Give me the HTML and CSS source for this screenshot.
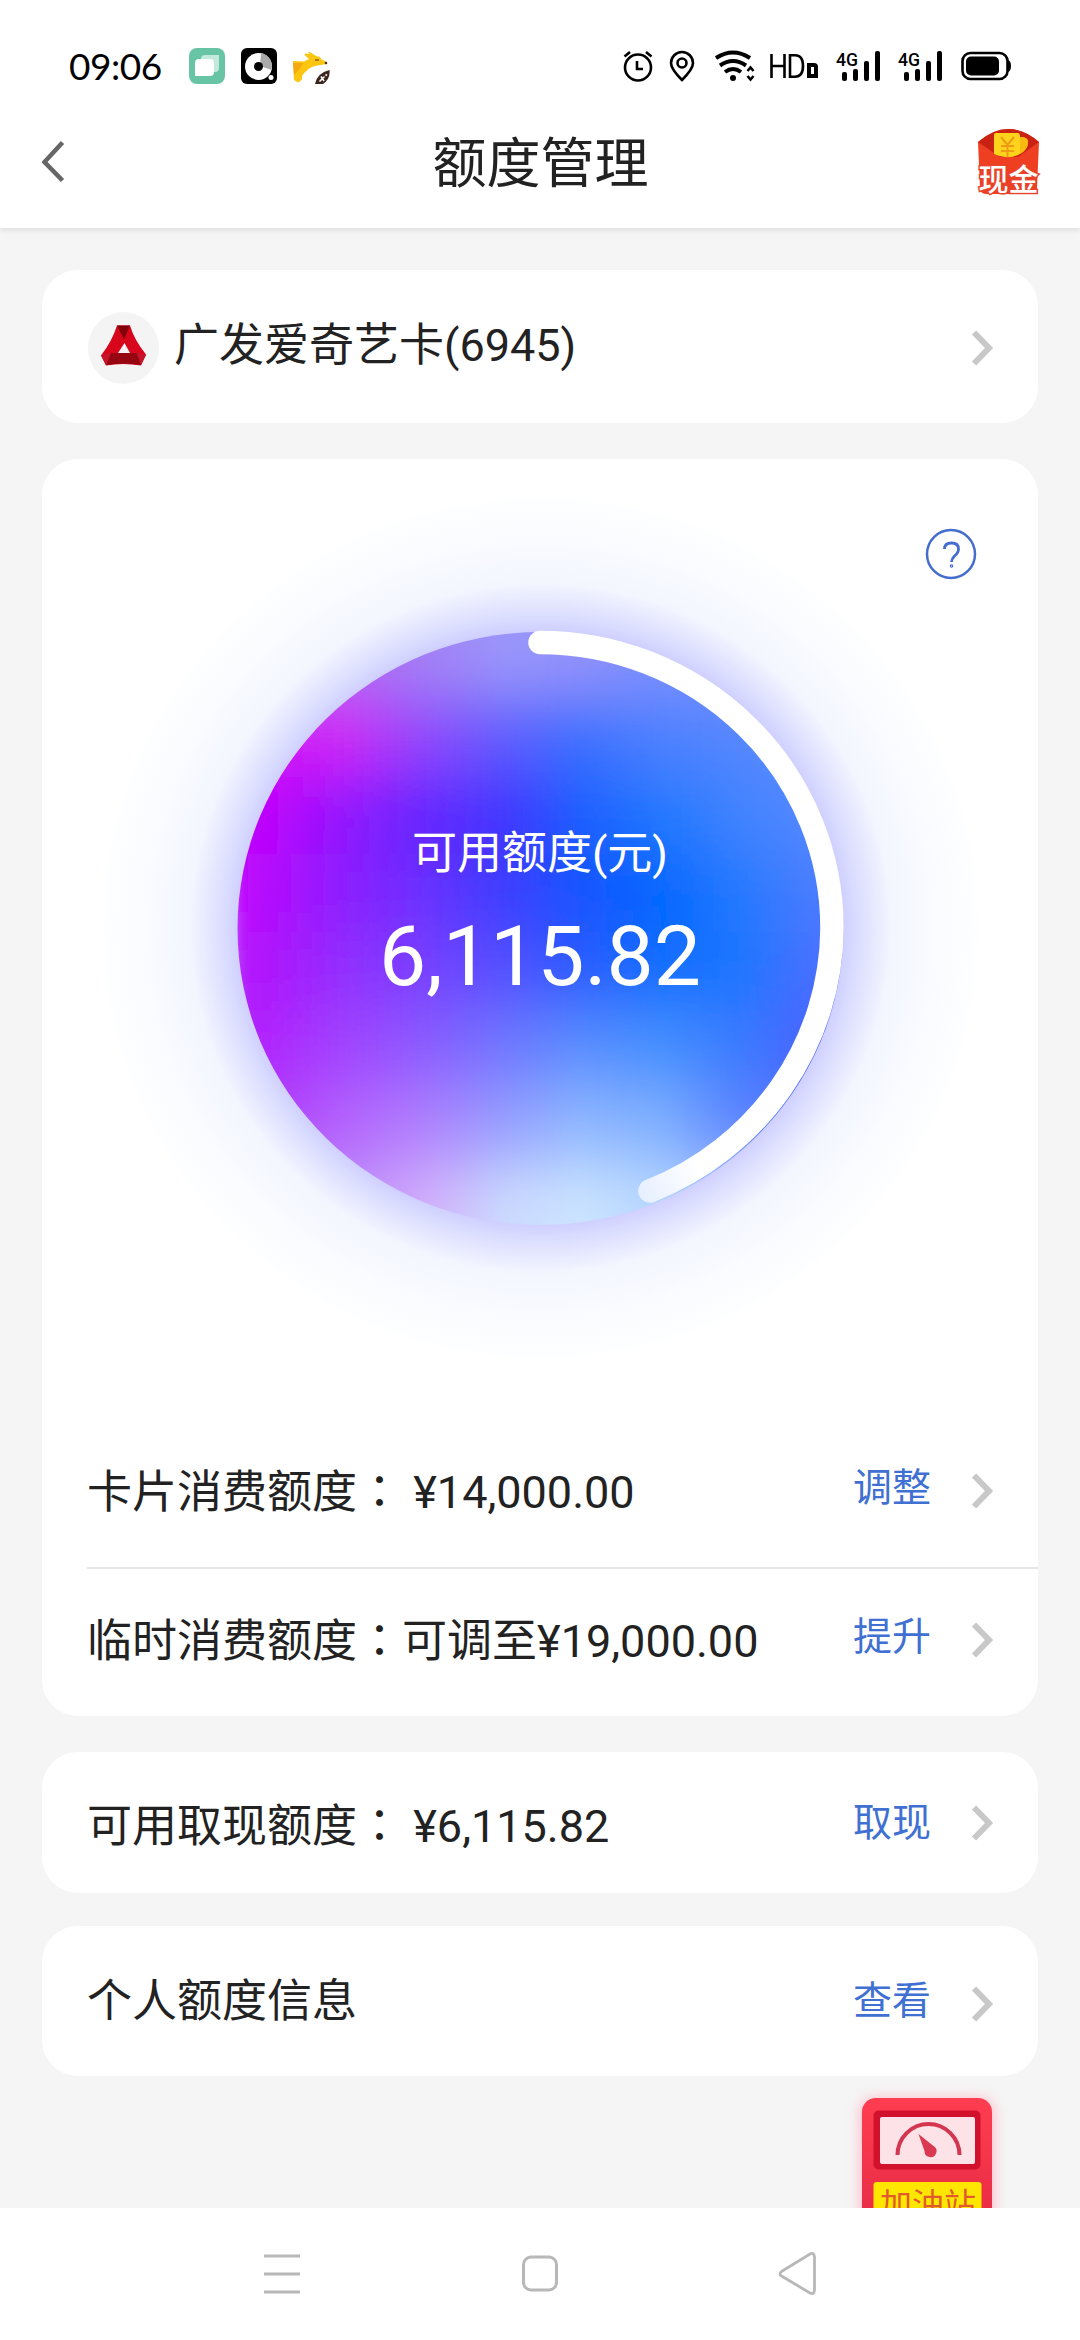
FILE: index.html
```html
<!DOCTYPE html>
<html lang="zh-CN">
<head>
<meta charset="utf-8">
<title>额度管理</title>
<link rel="stylesheet" href="styles.css">
</head>
<body>
<header class="top">
  <div class="status">
    <span class="time">09:06</span>
    <div class="apps">
      <svg width="36" height="36" viewBox="0 0 36 36"><rect width="36" height="36" rx="8" fill="#67c5a6"/><path d="M12 11q0-4 4-4h14v13q0 4-4 4H12z" fill="#c3e8dc"/><path d="M6 28V15q0-4 4-4h11q4 0 4 4v9q0 4-4 4z" fill="#fff"/></svg>
      <svg width="36" height="36" viewBox="0 0 36 36"><rect width="36" height="36" rx="6" fill="#000"/><circle cx="17.500" cy="18.500" r="13.500" fill="#fff"/><path d="M20 5A13.500 13.500 0 0 1 30.500 22L19 18z" fill="#aaa"/><circle cx="17.500" cy="18.500" r="4.500" fill="#000"/><circle cx="30" cy="29.500" r="2.500" fill="#fff"/></svg>
      <svg width="37" height="36" viewBox="0 0 37 36"><path d="M0 13l11 .5 5-2.500-4.500-4 .5-1.500 5 .5-2-1.500 2-.5 6 4 4 1 1.500 2.500L34 14l-.5 2-9 1.500q-6 .5-10 4.500-4 3-5.500 6 1 4-4 6.500L1 32z" fill="#fcc50f"/><path d="M0 15h10l-4 7-5 5z" fill="#f5a911"/><circle cx="33" cy="15" r="1.300" fill="#513126"/><path d="M22 12h4" stroke="#513126"/><path d="M22 36Q24 25 36.500 22 37.500 31 30 36z" fill="#3d241c"/><path d="M26.500 33.500l5-5M28 28.500l3 4.500M32.500 26.500l1.500 1" stroke="#fff" stroke-width="1.600"/></svg>
    </div>
    <svg class="sys" width="400" height="40" viewBox="620 46 400 40">
      <g fill="none" stroke="#000" stroke-width="2.600">
        <circle cx="638" cy="67.500" r="13"/><path d="M637 61v8h6M624.500 56.500l5.500-4.500M651.500 56.500L646 52"/>
        <path d="M682 80q-11-11-11-17a11 11 0 0 1 22 0q0 6-11 17z"/><circle cx="682" cy="63" r="4.500"/>
        <path d="M716 58q17-11 34 0M720 65.500q13-9 26 0M725 72q8-6 16 0" stroke-width="4"/>
        <path d="M747.500 71l3-3.500 3 3.500M747.500 76l3 3.500 3-3.500"/>
        <path d="M771.500 54v24M784.500 54v24M771.500 66h13M790 55.300h5q8 0 8 10.700t-8 10.700h-5z"/>
        <path d="M809 65h5q2 0 2 2v9h-7z" stroke-width="4"/>
        <rect x="962.500" y="53" width="45" height="26" rx="8"/>
      </g>
      <g fill="#000"><circle cx="733" cy="78" r="3"/>
        <rect x="842" y="72" width="5" height="9" rx="2"/><rect x="853" y="69" width="5" height="12" rx="2"/><rect x="864" y="61" width="5" height="20" rx="2"/><rect x="875" y="51" width="5" height="30" rx="2"/>
        <rect x="904" y="72" width="5" height="9" rx="2"/><rect x="915" y="69" width="5" height="12" rx="2"/><rect x="926" y="61" width="5" height="20" rx="2"/><rect x="937" y="51" width="5" height="30" rx="2"/>
        <rect x="966" y="56.500" width="33" height="19" rx="5"/><path d="M1008 60q3 1 3 6t-3 6z"/>
        <text class="net" x="836" y="65.500" textLength="22" lengthAdjust="spacingAndGlyphs">4G</text><text class="net" x="898" y="65.500" textLength="22" lengthAdjust="spacingAndGlyphs">4G</text></g>
    </svg>
  </div>
  <div class="titlebar">
    <svg width="64" height="68" viewBox="0 0 64 68"><path d="M20.500 14.500L2.500 34 20.500 52.500" fill="none" stroke="#666" stroke-width="4.500"/></svg>
    <h1>额度管理</h1>
    <svg width="68" height="68" viewBox="975 128 68 68">
      <path d="M978 142Q1008 116 1039 142L1037 188Q1037 194 1031 194H987Q980 194 980 188z" fill="#ef3f22"/>
      <path d="M978 142Q1008 116 1039 142L1018 157H1000z" fill="#c92213"/>
      <path d="M994 135q0-2 2-2h22q2 0 2 4 8 0 8 5 0 8-10 13-12 5-24-1z" fill="#ffd21b"/>
      <path d="M1020 137q8 0 8 5 0 8-8 12z" fill="#f8b911"/>
      <path d="M1001 137l6.500 8 6.500-8M1007.500 145v12M1001 146h13M1001 151h13" fill="none" stroke="#ef9b16" stroke-width="2"/>
      <text class="cash" x="1008.500" y="189.500" text-anchor="middle">现金</text>
    </svg>
  </div>
</header>

<main class="screen">
  <section class="card pick">
    <svg width="71" height="72" viewBox="88 312 71 72"><ellipse cx="123.500" cy="348" rx="35.500" ry="36" fill="#f4f4f4"/>
      <path d="M117 325.500h13q4 14 16 29l-5 11q-18-3-35 0l-5-10q11-14 16-30z" fill="#d8061d"/><path d="M117 325.500h13l-6 14z" fill="#81000a"/><path d="M111 353h26l4 12q-18-3-35 0z" fill="#960611"/><path d="M101 355.500l10-2.500-5 12zM146 355l-9-2 4 12z" fill="#c4152b"/><path d="M124.500 343l5.500 10h-12z" fill="#f4f4f4"/></svg>
    <span class="label">广发爱奇艺卡(6945)</span>
    <svg class="arrow" width="24" height="36" viewBox="0 0 24 36"><path d="M3 2.500L18 18 3 33.500" fill="none" stroke="#c8c8c8" stroke-width="6"/></svg>
  </section>

  <section class="card quota">
    <div class="gauge">
      <svg class="dial" width="996" height="961" viewBox="42 459 996 961">
        <defs>
          <clipPath id="disc"><ellipse cx="540.500" cy="928.500" rx="303" ry="296.500"/></clipPath>
          <radialGradient id="halo"><stop offset=".67" stop-color="#c8c8ff"/><stop offset=".72" stop-color="#dadcff"/><stop offset=".79" stop-color="#f0f2ff"/><stop offset=".8" stop-color="#f4f6ff"/><stop offset=".885" stop-color="#f8faff"/><stop offset=".89" stop-color="#fafbff"/><stop offset=".99" stop-color="#fdfeff"/><stop offset="1" stop-color="#fff"/></radialGradient>
          <linearGradient id="trail" gradientUnits="userSpaceOnUse" x1="700" y1="1170" x2="645" y2="1195"><stop offset="0" stop-color="#fff"/><stop offset="1" stop-color="#e8f0ff"/></linearGradient>
          <filter id="soft" filterUnits="userSpaceOnUse" x="0" y="420" width="1080" height="1040"><feGaussianBlur stdDeviation="10 30"/></filter>
          <linearGradient id="b1"><stop offset=".06" stop-color="#b070f8"/><stop offset=".19" stop-color="#b068f5"/><stop offset=".31" stop-color="#a480f6"/><stop offset=".44" stop-color="#9a96fa"/><stop offset=".56" stop-color="#9292fb"/><stop offset=".69" stop-color="#7a90fe"/><stop offset="1" stop-color="#6f8fff"/></linearGradient>
          <linearGradient id="b2"><stop offset=".06" stop-color="#d80cf8"/><stop offset=".19" stop-color="#cc2af5"/><stop offset=".31" stop-color="#9345fb"/><stop offset=".44" stop-color="#5f5cfe"/><stop offset=".56" stop-color="#3a70ff"/><stop offset=".69" stop-color="#4c80ff"/><stop offset="1" stop-color="#6090ff"/></linearGradient>
          <linearGradient id="b3"><stop offset=".06" stop-color="#bc04fc"/><stop offset=".19" stop-color="#8d17fe"/><stop offset=".31" stop-color="#6424ff"/><stop offset=".44" stop-color="#4034ff"/><stop offset=".56" stop-color="#1c5eff"/><stop offset=".69" stop-color="#2078ff"/><stop offset=".81" stop-color="#3f82ff"/><stop offset=".94" stop-color="#5588ff"/></linearGradient>
          <linearGradient id="b4"><stop offset=".02" stop-color="#c005fd"/><stop offset=".19" stop-color="#8a20fe"/><stop offset=".31" stop-color="#6a30ff"/><stop offset=".44" stop-color="#3c3eff"/><stop offset=".56" stop-color="#1854ff"/><stop offset=".69" stop-color="#0466ff"/><stop offset=".81" stop-color="#2278ff"/><stop offset=".94" stop-color="#4a7cff"/></linearGradient>
          <linearGradient id="b5"><stop offset=".04" stop-color="#b212fc"/><stop offset=".19" stop-color="#9030fe"/><stop offset=".31" stop-color="#7840ff"/><stop offset=".44" stop-color="#5450ff"/><stop offset=".56" stop-color="#2b5cff"/><stop offset=".69" stop-color="#106eff"/><stop offset=".81" stop-color="#1c74ff"/><stop offset=".94" stop-color="#4870ff"/></linearGradient>
          <linearGradient id="b6"><stop offset=".06" stop-color="#b026fd"/><stop offset=".19" stop-color="#a045fe"/><stop offset=".31" stop-color="#8c5cff"/><stop offset=".44" stop-color="#7078ff"/><stop offset=".56" stop-color="#5a8eff"/><stop offset=".69" stop-color="#4490ff"/><stop offset=".81" stop-color="#3a7cff"/><stop offset=".94" stop-color="#4a60ff"/></linearGradient>
          <linearGradient id="b7"><stop offset=".06" stop-color="#b040fb"/><stop offset=".19" stop-color="#b565fd"/><stop offset=".31" stop-color="#b080fd"/><stop offset=".44" stop-color="#98a0fe"/><stop offset=".56" stop-color="#90b8ff"/><stop offset=".69" stop-color="#80b0ff"/><stop offset=".81" stop-color="#6088ff"/><stop offset=".94" stop-color="#5070ff"/></linearGradient>
          <linearGradient id="b8"><stop offset=".06" stop-color="#c080fb"/><stop offset=".19" stop-color="#c090fb"/><stop offset=".31" stop-color="#d2b0fb"/><stop offset=".44" stop-color="#ccdafe"/><stop offset=".56" stop-color="#cce4ff"/><stop offset=".69" stop-color="#b8d8ff"/><stop offset=".81" stop-color="#a0c0ff"/><stop offset=".94" stop-color="#90b0ff"/></linearGradient>
        </defs>
        <ellipse cx="540.500" cy="928" rx="439" ry="431" fill="url(#halo)"/>
        <g clip-path="url(#disc)">
          <g filter="url(#soft)">
            <rect x="230" y="500" width="624" height="198" fill="url(#b1)"/>
            <rect x="230" y="698" width="624" height="78" fill="url(#b2)"/>
            <rect x="230" y="776" width="624" height="78" fill="url(#b3)"/>
            <rect x="230" y="854" width="624" height="78" fill="url(#b4)"/>
            <rect x="230" y="932" width="624" height="78" fill="url(#b5)"/>
            <rect x="230" y="1010" width="624" height="78" fill="url(#b6)"/>
            <rect x="230" y="1088" width="624" height="78" fill="url(#b7)"/>
            <rect x="230" y="1166" width="624" height="198" fill="url(#b8)"/>
          </g>
        </g>
        <path d="M540 642.500A292 285.500 0 0 1 832 928A292 285.500 0 0 1 650 1191" fill="none" stroke="url(#trail)" stroke-width="23.500" stroke-linecap="round"/>
        <g fill="none" stroke="#456dcd"><circle cx="951" cy="554" r="24" stroke-width="2.500"/><path d="M944.500 549q0-6 7-6t7 6q0 4-4 7-3 3-3 6" stroke-width="2.800"/><circle cx="951.500" cy="566" r=".6" stroke-width="2.400"/></g>
      </svg>
      <div class="figure"><span class="caption">可用额度(元)</span><strong>6,115.82</strong></div>
    </div>
    <div class="row first">
      <span class="label">卡片消费额度<span class="colon" lang="zh-TW">：</span> ¥14,000.00</span><a class="act">调整</a>
      <svg class="arrow" width="24" height="36" viewBox="0 0 24 36"><path d="M3 2.500L18 18 3 33.500" fill="none" stroke="#c8c8c8" stroke-width="6"/></svg>
    </div>
    <div class="row second">
      <span class="label">临时消费额度<span class="colon" lang="zh-TW">：</span>可调至¥19,000.00</span><a class="act">提升</a>
      <svg class="arrow" width="24" height="36" viewBox="0 0 24 36"><path d="M3 2.500L18 18 3 33.500" fill="none" stroke="#c8c8c8" stroke-width="6"/></svg>
    </div>
  </section>

  <section class="card row cashout">
    <span class="label">可用取现额度<span class="colon" lang="zh-TW">：</span> ¥6,115.82</span><a class="act">取现</a>
    <svg class="arrow" width="24" height="36" viewBox="0 0 24 36"><path d="M3 2.500L18 18 3 33.500" fill="none" stroke="#c8c8c8" stroke-width="6"/></svg>
  </section>
  <section class="card row info">
    <span class="label">个人额度信息</span><a class="act">查看</a>
    <svg class="arrow" width="24" height="36" viewBox="0 0 24 36"><path d="M3 2.500L18 18 3 33.500" fill="none" stroke="#c8c8c8" stroke-width="6"/></svg>
  </section>

  <div class="station">
    <svg width="170" height="132" viewBox="842 2076 170 132">
      <defs><linearGradient id="pump" x1="0" y1="0" x2="0" y2="1"><stop offset="0" stop-color="#ff3d51"/><stop offset="1" stop-color="#e42a43"/></linearGradient><filter id="glow" x="-20%" y="-20%" width="140%" height="140%"><feGaussianBlur stdDeviation="7"/></filter></defs>
      <rect x="860" y="2098" width="134" height="150" rx="14" fill="#ffbcc8" filter="url(#glow)"/>
      <rect x="862" y="2098" width="130" height="140" rx="14" fill="url(#pump)"/>
      <rect x="873.500" y="2110.500" width="107" height="59" rx="5" fill="#d2122c"/>
      <rect x="880" y="2117" width="95" height="47" rx="2" fill="#fde2e7"/>
      <path d="M897.500 2155a31 31 0 0 1 62 0" fill="none" stroke="#d43650" stroke-width="4"/>
      <path d="M918.500 2134l15 12a6 6 0 1 1-9 5z" fill="#d93951"/>
      <rect x="873.500" y="2182" width="108" height="40" rx="3" fill="#ffe600"/>
      <text class="fuel" x="928" y="2216" text-anchor="middle">加油站</text>
    </svg>
  </div>
</main>

<nav class="keys">
  <svg width="40" height="44" viewBox="0 0 40 44"><path d="M2 4h36M2 22h36M2 40h36" stroke="#b8b8b8" stroke-width="3"/></svg>
  <svg width="40" height="44" viewBox="0 0 40 44"><rect x="3.500" y="5" width="33" height="33" rx="7.500" fill="none" stroke="#b8b8b8" stroke-width="3"/></svg>
  <svg width="40" height="50" viewBox="0 0 40 50"><path d="M3.500 22.500L32 5q4-2 4.500 3v33q-.5 5-4.500 3L3.500 27q-3-2 0-4.500z" fill="none" stroke="#b8b8b8" stroke-width="2.800"/></svg>
</nav>
</body>
</html>
```
FILE: styles.css
```css
* { box-sizing: border-box; }
body {
  margin: 0;
  width: 1080px;
  height: 2340px;
  display: flex;
  flex-direction: column;
  overflow: hidden;
  background: #f5f5f5;
  color: #222;
  font-family: Roboto, "Noto Sans CJK SC", sans-serif;
}
svg { display: block; flex: none; }
.top { height: 228px; background: #fff; box-shadow: 0 2px 6px rgba(0, 0, 0, .1); z-index: 1; }
.status { height: 132px; padding: 0 60px 0 69px; display: flex; align-items: center; }
.time { width: 120px; font: 37px/40px Lato, sans-serif; letter-spacing: -.5px; color: #000; }
.apps { display: flex; gap: 16px; }
.sys { margin-left: auto; }
.net { font: 500 19px Roboto, sans-serif; }
.titlebar { height: 68px; margin-top: -4px; padding: 0 37px 0 42px; display: flex; align-items: center; justify-content: space-between; }
h1 { margin: 6px 0 0; font-size: 54px; font-weight: 400; line-height: 64px; }
.cash { font: 500 30px "Noto Sans CJK SC", sans-serif; fill: #fff; stroke: #e8442c; stroke-width: 3px; paint-order: stroke; }
.screen { position: relative; height: 1980px; padding: 42px 42px 0; overflow: hidden; }
.card { background: #fff; border-radius: 36px; }
.label { font-size: 45px; line-height: 60px; white-space: pre; }
.colon { font-family: "Noto Sans CJK TC", sans-serif; }
.arrow { margin-left: auto; }
.pick { height: 153px; padding: 3px 43px 0 46px; display: flex; align-items: center; }
.pick .label { margin: 0 0 5px 15px; }
.quota { height: 1257px; margin-top: 36px; }
.gauge { height: 961px; display: grid; }
.dial, .figure { grid-area: 1 / 1; }
.figure { padding-top: 365px; display: flex; flex-direction: column; align-items: center; color: #fff; }
.caption { font-size: 45px; line-height: 60px; }
.figure strong { font-size: 84px; font-weight: 400; line-height: 100px; margin-top: 23px; }
.row { display: flex; align-items: center; padding: 0 43px 0 45px; }
.row .act { margin: 0 40px 6px auto; font-size: 39px; line-height: 52px; color: #4070d2; }
.row .arrow { margin-left: 0; }
.first { height: 149px; margin-left: 45px; padding: 0 43px 5px 0; border-bottom: 2px solid #e5e5e5; }
.second { height: 142px; }
.cashout { height: 141px; margin-top: 36px; }
.cashout .label { margin-top: 4px; }
.cashout .act { margin-bottom: 0; }
.info { height: 150px; margin-top: 33px; padding-top: 5px; }
.info .label { margin-bottom: 4px; }
.station { position: absolute; left: 842px; bottom: 0; }
.fuel { font: 32px "Noto Sans CJK SC", sans-serif; fill: #e25a2c; }
.keys { height: 132px; padding: 0 262px; display: flex; align-items: center; justify-content: space-between; background: #fff; z-index: 1; }
```
